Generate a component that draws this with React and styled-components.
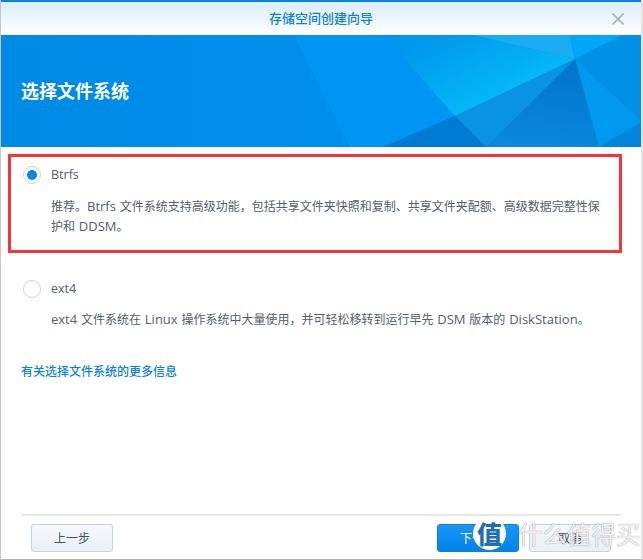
import React from 'react'
import styled, { createGlobalStyle } from 'styled-components'

const GlobalStyle = createGlobalStyle`
html, body {
    margin: 0;
    padding: 0;
    background: #fff;
}
* {
    box-sizing: border-box;
}
`

const WizardWindow = styled.div`
position: relative;
width: 643px;
height: 560px;
overflow: hidden;
display: flex;
flex-direction: column;
background: #fff;
border-left: 1px solid #c6c6c6;
border-right: 2px solid #e4e4e4;
border-bottom: 1px solid #b4b4b4;
color: #53606b;
font-family: "Open Sans", "Noto Sans CJK SC", sans-serif;
font-size: 12px;
`

const TitleBar = styled.div`
flex: none;
position: relative;
height: 35px;
padding-bottom: 2px;
border-top: 2px solid #0484dc;
background: linear-gradient(#dcecfa, #ffffff);
display: flex;
align-items: center;
justify-content: center;
color: #0a82e0;
font-size: 13px;
font-weight: 500;
`

const CloseIcon = styled.svg`
position: absolute;
top: 11px;
right: 17px;
`

const Banner = styled.div`
flex: none;
position: relative;
height: 112px;
padding: 0 20px 0 20px;
display: flex;
align-items: center;
background: #008ceb;
`

const BannerArt = styled.svg`
position: absolute;
top: 0;
left: 0;
`

const BannerTitle = styled.h1`
position: relative;
margin: 0;
color: #fff;
font-size: 18px;
font-weight: 700;
line-height: 26px;
`

const Content = styled.div`
flex: 1;
padding: 7px 20px 0 7px;
`

const Option = styled.div`
width: 614px;
padding: ${props => props.$marked ? '8px 12px 0 12px' : '12px 12px 0 15px'};
height: ${props => props.$marked ? '99px' : 'auto'};
border: ${props => props.$marked ? '3px solid #fb3339' : 'none'};
margin-bottom: 14px;
`

const OptionHead = styled.div`
display: flex;
align-items: center;
gap: 10px;
height: 20px;
`

const Radio = styled.span`
flex: none;
width: 18px;
height: 18px;
border-radius: 50%;
border: 1px solid #c8d3df;
background: #fff;
display: flex;
align-items: center;
justify-content: center;

&::after {
    content: '';
    display: ${props => props.$checked ? 'block' : 'none'};
    width: 10px;
    height: 10px;
    border-radius: 50%;
    background: #0086ee;
}
`

const OptionName = styled.span`
line-height: 18px;
font-size: 12.5px;
`

const OptionText = styled.p`
margin: ${props => props.$tight ? '11px' : '12px'} 0 0 28px;
line-height: 20px;
word-spacing: 0.7px;
`

// the latin words in the wizard text run a size larger than the chinese
const Latin = styled.span`
font-size: 13px;
line-height: 1;
`

const MoreLink = styled.a`
display: block;
margin: 32px 0 0 13px;
color: #0a82e0;
font-weight: 500;
line-height: 20px;
text-decoration: none;
`

const Footer = styled.div`
flex: none;
height: 45px;
margin: 0 20px;
padding: 8px 10px 0;
border-top: 2px solid #e6e6e6;
display: flex;
gap: 10px;
`

const Button = styled.button`
width: 82px;
height: 28px;
padding: 0;
border-radius: 3px;
border: 1px solid ${props => props.$primary ? '#0a7fdc' : '#c3d1de'};
background: ${props => props.$primary ? 'linear-gradient(#1a96f5, #0582e8)' : 'linear-gradient(#f5f9fc, #e9eff5)'};
color: ${props => props.$primary ? '#fff' : '#45525e'};
font-family: inherit;
font-size: 12px;
margin-left: ${props => props.$pushed ? 'auto' : '0'};
`

const WatermarkBadge = styled.div`
position: absolute;
left: 472px;
top: 517px;
width: 33px;
height: 33px;
border-radius: 50%;
background: #fff;
color: #1c6fb4;
display: flex;
align-items: center;
justify-content: center;
font-family: "Noto Sans CJK SC", sans-serif;
font-size: 25px;
font-weight: 900;
line-height: 1;
`

const WatermarkText = styled.div`
position: absolute;
left: 517px;
top: 519px;
color: rgba(255, 255, 255, 0.9);
font-family: "Noto Sans CJK SC", sans-serif;
font-size: 24.5px;
line-height: 30px;
white-space: nowrap;
text-shadow: 0 0 1px rgba(100, 100, 100, 0.9);
`

const facets = [
    ['0,0 293,0 349,112 0,112', 'url(#baseLeft)'],
    ['293,0 382,0 454,81 382,112 349,112', '#0095f2'],
    ['382,0 472,0 574,24 454,81', 'url(#glow)'],
    ['472,0 569,0 574,24', '#1aabf2'],
    ['569,0 622,0 574,24', '#00a7fa'],
    ['622,0 641,0 641,87 574,24', '#0090e6'],
    ['574,24 641,87 598,112', '#0099ef'],
    ['641,87 641,112 598,112', '#0084dc'],
    ['574,24 598,112 485,112', 'url(#deep)'],
    ['574,24 485,112 454,81', '#0a93e2'],
    ['454,81 485,112 382,112', '#007bd4'],
]

const App = () => {
    return (
        <WizardWindow>
            <GlobalStyle />
            <TitleBar>
                存储空间创建向导
                <CloseIcon width="12" height="12" viewBox="0 0 12 12">
                    <path d="M0.5 0.5L11.5 11.5M11.5 0.5L0.5 11.5" stroke="#a9b2ba" strokeWidth="1.7" fill="none" />
                </CloseIcon>
            </TitleBar>
            <Banner>
                <BannerArt width="641" height="112" viewBox="0 0 641 112">
                    <defs>
                        <linearGradient id="baseLeft" x1="0" y1="0" x2="1" y2="0">
                            <stop offset="0" stopColor="#008ae8" />
                            <stop offset="1" stopColor="#008eec" />
                        </linearGradient>
                        <linearGradient id="glow" gradientUnits="userSpaceOnUse" x1="440" y1="0" x2="475" y2="72">
                            <stop offset="0" stopColor="#0098ee" />
                            <stop offset="1" stopColor="#04b8f5" />
                        </linearGradient>
                        <linearGradient id="deep" x1="0.7" y1="0" x2="0.5" y2="1">
                            <stop offset="0" stopColor="#0074c8" />
                            <stop offset="1" stopColor="#0a88dc" />
                        </linearGradient>
                    </defs>
                    {facets.map(([points, fill]) => (
                        <polygon key={points} points={points} fill={fill} />
                    ))}
                </BannerArt>
                <BannerTitle>选择文件系统</BannerTitle>
            </Banner>
            <Content>
                <Option $marked>
                    <OptionHead>
                        <Radio $checked />
                        <OptionName>Btrfs</OptionName>
                    </OptionHead>
                    <OptionText>
                        推荐。<Latin>Btrfs</Latin> 文件系统支持高级功能，包括共享文件夹快照和复制、共享文件夹配额、高级数据完整性保护和 <Latin>DDSM</Latin>。
                    </OptionText>
                </Option>
                <Option>
                    <OptionHead>
                        <Radio />
                        <OptionName>ext4</OptionName>
                    </OptionHead>
                    <OptionText $tight>
                        <Latin>ext4</Latin> 文件系统在 <Latin>Linux</Latin> 操作系统中大量使用，并可轻松移转到运行早先 <Latin>DSM</Latin> 版本的 <Latin>DiskStation</Latin>。
                    </OptionText>
                </Option>
                <MoreLink href="#">有关选择文件系统的更多信息</MoreLink>
            </Content>
            <Footer>
                <Button>上一步</Button>
                <Button $primary $pushed>下一步</Button>
                <Button>取消</Button>
            </Footer>
            <WatermarkBadge>值</WatermarkBadge>
            <WatermarkText>什么值得买</WatermarkText>
        </WizardWindow>
    )
}

export default App
